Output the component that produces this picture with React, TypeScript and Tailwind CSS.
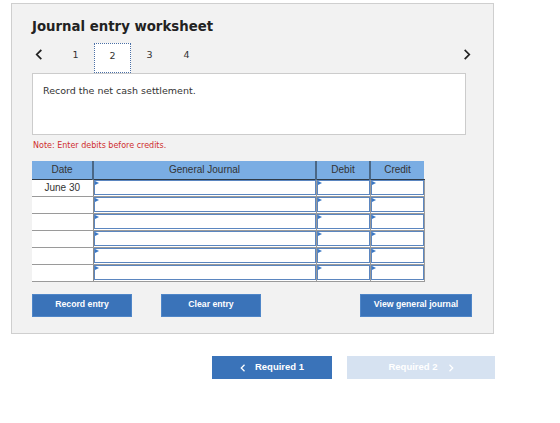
import React from 'react';

const verdana = { fontFamily: '"DejaVu Sans", Verdana, sans-serif' };
const arial = { fontFamily: '"Liberation Sans", Arial, sans-serif' };

function Chevron({ dir, className }: { dir: 'left' | 'right'; className?: string }) {
    return (
        <svg viewBox="0 0 8 12" className={className} fill="none" stroke="currentColor" strokeWidth="2" strokeLinecap="square">
            {dir === 'left' ? <path d="M6.5 1.5 L2 6 L6.5 10.5" /> : <path d="M1.5 1.5 L6 6 L1.5 10.5" />}
        </svg>
    );
}

// Input cell with the small blue marker in its top-left corner
function EntryCell() {
    return (
        <td className="p-0 border border-[#9a9a9a] bg-white">
            <div className="relative h-[15px] border border-[#5b86c0]">
                <span className="absolute top-0 left-0 w-0 h-0 border-l-[4px] border-l-[#3b78c4] border-y-[2.5px] border-y-transparent" />
            </div>
        </td>
    );
}

const rows = ['June 30', '', '', '', '', ''];

export default function App() {
    return (
        <div className="w-[560px] h-[423px] bg-white overflow-hidden">
            <div className="ml-[11px] mt-[3px] w-[483px] h-[331px] border border-[#cfcfcf] bg-[#f2f2f2] pl-[20px] pr-[27px] pt-[15px]">
                {/* Title */}
                <div className="h-[16px] leading-[16px] text-[13.3px] font-bold text-[#222]" style={verdana}>
                    Journal entry worksheet
                </div>

                {/* Tabs */}
                <div className="mt-[8px] h-[30px] flex items-start justify-between" style={verdana}>
                    <div className="flex items-start">
                        <div className="w-[25px] h-[30px] pt-[6px] pl-[3px] text-[#222]">
                            <Chevron dir="left" className="w-[7px] h-[11px]" />
                        </div>
                        {['1', '2', '3', '4'].map(n => (
                            <div
                                key={n}
                                className={`w-[37px] h-[30px] pt-[5px] text-center text-[9.5px] text-[#333] ${n === '2' ? 'bg-white border border-dotted border-[#4a6fa5]' : ''}`}
                            >
                                {n}
                            </div>
                        ))}
                    </div>
                    <div className="pt-[6px] -mr-[5px] text-[#222]">
                        <Chevron dir="right" className="w-[7px] h-[11px]" />
                    </div>
                </div>

                {/* Instruction box */}
                <div className="h-[62px] bg-white border border-[#cccccc] pl-[10px] pt-[10px] text-[9.5px] text-[#333]" style={verdana}>
                    Record the net cash settlement.
                </div>

                <div className="mt-[5px] h-[12px] leading-[12px] text-[8px] text-[#cf2e2e] pl-[1px]" style={verdana}>
                    Note: Enter debits before credits.
                </div>

                {/* Journal grid */}
                <table className="mt-[9px] w-[392px] table-fixed border-collapse text-[10px] text-[#333]" style={arial}>
                    <colgroup>
                        <col className="w-[61px]" />
                        <col className="w-[223px]" />
                        <col className="w-[54px]" />
                        <col className="w-[54px]" />
                    </colgroup>
                    <thead>
                        <tr className="h-[18px] bg-[#7aade3]">
                            <th className="font-normal border-r-2 border-r-[#4a6785] border-b border-b-[#2f3b48]">Date</th>
                            <th className="font-normal border-r-2 border-r-[#4a6785] border-b border-b-[#2f3b48]">General Journal</th>
                            <th className="font-normal border-r-2 border-r-[#4a6785] border-b border-b-[#2f3b48]">Debit</th>
                            <th className="font-normal border-b border-b-[#2f3b48]">Credit</th>
                        </tr>
                    </thead>
                    <tbody>
                        {rows.map((d, i) => (
                            <tr key={i} className="h-[17px]">
                                <td className="p-0 bg-white text-center border-b border-b-[#9a9a9a] border-r border-r-[#8a8a8a]">{d}</td>
                                <EntryCell />
                                <EntryCell />
                                <EntryCell />
                            </tr>
                        ))}
                    </tbody>
                </table>

                {/* Actions */}
                <div className="mt-[12px] w-[440px] flex items-center text-[8.7px] font-bold text-white" style={arial}>
                    <button className="w-[100px] h-[23px] bg-[#3a73b9] border border-[#4f86c8]">Record entry</button>
                    <button className="ml-[29px] w-[100px] h-[23px] bg-[#3a73b9] border border-[#4f86c8]">Clear entry</button>
                    <button className="ml-auto w-[112px] h-[23px] bg-[#3a73b9] border border-[#4f86c8]">View general journal</button>
                </div>
            </div>

            {/* Part navigation */}
            <div className="ml-[212px] mt-[22px] flex gap-[15px] text-[9.5px] font-bold text-white" style={arial}>
                <button className="w-[120px] h-[23px] bg-[#3a73b9] flex items-center justify-center gap-[10px]">
                    <Chevron dir="left" className="w-[5px] h-[8px]" />
                    Required 1
                </button>
                <button className="w-[148px] h-[23px] bg-[#d6e2f1] flex items-center justify-center gap-[11px]">
                    Required 2
                    <Chevron dir="right" className="w-[5px] h-[8px]" />
                </button>
            </div>
        </div>
    );
}
